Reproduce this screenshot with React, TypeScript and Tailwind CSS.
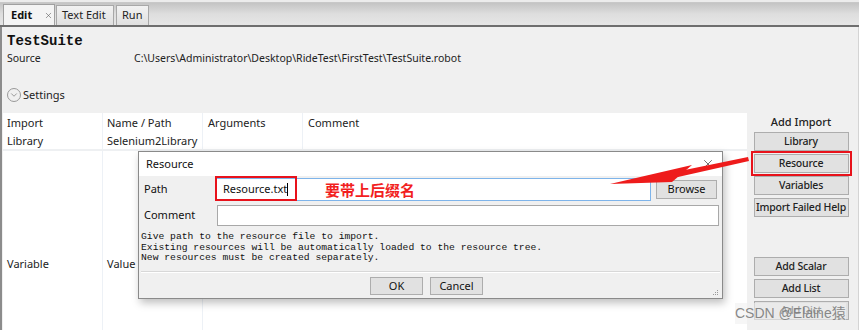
import { ChevronDown, X } from "lucide-react";

const ui = "font-['Noto_Sans','Noto_Sans_CJK_SC',sans-serif]";

const SideButton = ({ label }: { label: string }) => (
  <div className="w-[95px] h-[19px] bg-[#e1e1e1] border border-[#adadad] flex items-center justify-center whitespace-nowrap text-[10.5px] tracking-[-0.2px] font-medium text-[#222]">
    {label}
  </div>
);

const DialogButton = ({ label }: { label: string }) => (
  <div className="w-[53px] h-[18px] bg-[#e1e1e1] border border-[#adadad] flex items-center justify-center text-[11px] text-[#111]">
    {label}
  </div>
);

const ResourceDialog = () => (
  <div className="absolute left-[138px] top-[151px] w-[585px] h-[148px] border border-[#8a8a8a] bg-[#f0f0f0] shadow-[2px_4px_8px_rgba(0,0,0,0.25)] flex flex-col">
    <div className="h-[24px] bg-white flex items-center justify-between pl-[7px] pr-[7px] text-[11px] text-[#111]">
      <span>Resource</span>
      <X size={14} strokeWidth={1.2} className="text-[#333]" />
    </div>
    <div className="flex items-center h-[23px] mt-[2px] pl-[5px]">
      <span className="w-[72px] text-[11px] text-[#111]">Path</span>
      <div className="relative w-[435px] h-[23px] bg-white border border-[#7eb4ea] flex items-center pl-[6px] text-[11px] text-[#111]">
        Resource.txt
        <span className="w-px h-[13px] bg-black" />
        <div className="absolute left-[-2px] top-[-3px] w-[82px] h-[25px] border-2 border-[#e8121b]" />
        <span className="absolute left-[108px] top-[1px] text-[15px] font-bold text-[#f21f1f] font-['Noto_Sans_CJK_SC',sans-serif] leading-[20px]">
          要带上后缀名
        </span>
      </div>
      <div className="ml-[5px] w-[61px] h-[19px] bg-[#e1e1e1] border border-[#adadad] flex items-center justify-center text-[11px] text-[#111]">
        Browse
      </div>
    </div>
    <div className="flex items-center h-[21px] mt-[4px] pl-[5px]">
      <span className="w-[73px] text-[11px] text-[#111]">Comment</span>
      <div className="w-[502px] h-[21px] bg-white border border-[#a8a8a8]" />
    </div>
    <div className="mt-[6px] pl-[2px] font-['Liberation_Mono',monospace] text-[9.7px] leading-[10.6px] text-[#111] whitespace-pre">
      <div>Give path to the resource file to import.</div>
      <div>Existing resources will be automatically loaded to the resource tree.</div>
      <div>New resources must be created separately.</div>
    </div>
    <div className="mx-[2px] mt-[7px] h-[2px] bg-[#d8d8d8] border-b border-white" />
    <div className="flex justify-center gap-[7px] mt-[4px] pr-[8px]">
      <DialogButton label="OK" />
      <DialogButton label="Cancel" />
    </div>
    <svg className="absolute right-[3px] bottom-[2px]" width="7" height="7" viewBox="0 0 7 7">
      <rect x="5" y="1" width="1" height="1" fill="#999" />
      <rect x="3" y="3" width="1" height="1" fill="#999" />
      <rect x="5" y="3" width="1" height="1" fill="#999" />
      <rect x="1" y="5" width="1" height="1" fill="#999" />
      <rect x="3" y="5" width="1" height="1" fill="#999" />
      <rect x="5" y="5" width="1" height="1" fill="#999" />
    </svg>
  </div>
);

export default function App() {
  return (
    <div className={`relative w-[859px] h-[330px] overflow-hidden bg-[#f0f0f0] ${ui}`}>
      {/* tab bar */}
      <div className="h-[3px] bg-[#ececec] border-b border-[#c8c8c8]" />
      <div className="h-[24px] flex items-end px-[3px] bg-gradient-to-b from-[#c4c4c4] via-[#dedede] to-[#e6e6e6] border-b-2 border-[#6e6e6e]">
        <div className="h-[21px] w-[52px] bg-[#f4f4f4] border border-b-0 border-[#a0a0a0] flex items-center pl-[7px] gap-[12px] text-[11px] font-bold text-[#111]">
          Edit
          <X size={9} strokeWidth={1.5} className="text-[#555]" />
        </div>
        <div className="h-[20px] w-[58px] ml-px bg-gradient-to-b from-[#f2f2f2] to-[#e0e0e0] border border-b-0 border-[#a8a8a8] flex items-center pl-[5px] text-[11px] text-[#222]">
          Text Edit
        </div>
        <div className="h-[20px] w-[33px] ml-[2px] bg-gradient-to-b from-[#f2f2f2] to-[#e0e0e0] border border-b-0 border-[#a8a8a8] flex items-center pl-[5px] text-[11px] text-[#222]">
          Run
        </div>
      </div>

      {/* main */}
      <div className="h-[303px] border-l-2 border-[#8c8c8c] border-r border-r-[#d4d4d4] flex flex-col">
        <div className="pl-[5px] pt-[5px] h-[23px] font-['Liberation_Mono',monospace] font-bold text-[14px] text-[#111] flex items-center">
          TestSuite
        </div>
        <div className="pl-[5px] mt-[2px] h-[14px] flex items-center text-[10.5px] text-[#222]">
          <span className="w-[127px]">Source</span>
          <span>C:\Users\Administrator\Desktop\RideTest\FirstTest\TestSuite.robot</span>
        </div>
        <div className="pl-[5px] mt-[21px] h-[16px] flex items-center text-[11px] text-[#222]">
          <span className="w-[14px] h-[14px] rounded-full border border-[#999] flex items-center justify-center mr-[2px]">
            <ChevronDown size={10} strokeWidth={1.5} className="text-[#666]" />
          </span>
          Settings
        </div>

        <div className="mt-[10px] flex flex-1">
          <div className="w-[744px] ml-px bg-white flex flex-col text-[11px] text-[#222]">
            <div className="flex h-[20px] items-center">
              <div className="w-[100px] pl-[4px] border-r border-[#edf1f6] h-full flex items-center">Import</div>
              <div className="w-[100px] pl-[4px] border-r border-[#edf1f6] h-full flex items-center">Name / Path</div>
              <div className="w-[100px] pl-[5px] border-r border-[#edf1f6] h-full flex items-center">Arguments</div>
              <div className="flex-1 pl-[5px] h-full flex items-center">Comment</div>
            </div>
            <div className="flex h-[18px] items-center border-b-2 border-[#eef0f2]">
              <div className="w-[100px] pl-[4px] border-r border-[#edf1f6] h-full flex items-center">Library</div>
              <div className="w-[100px] pl-[4px] border-r border-[#edf1f6] h-full flex items-center">Selenium2Library</div>
              <div className="w-[100px] border-r border-[#edf1f6] h-full" />
              <div className="flex-1" />
            </div>
            <div className="flex flex-1">
              <div className="w-[100px] pl-[4px] border-r border-[#edf1f6] pt-[105px]">Variable</div>
              <div className="w-[100px] pl-[4px] border-r border-[#edf1f6] pt-[105px]">Value</div>
              <div className="flex-1" />
            </div>
          </div>

          <div className="flex-1 flex flex-col items-center pt-[1px] pr-[3px]">
            <div className="h-[17px] flex items-center text-[11px] font-medium text-[#222]">Add Import</div>
            <div className="mt-[1px]">
              <SideButton label="Library" />
            </div>
            <div className="mt-0 p-px border-2 border-[#e8121b]">
              <SideButton label="Resource" />
            </div>
            <div className="mt-0">
              <SideButton label="Variables" />
            </div>
            <div className="mt-[3px]">
              <SideButton label="Import Failed Help" />
            </div>
            <div className="mt-[40px]">
              <SideButton label="Add Scalar" />
            </div>
            <div className="mt-[3px]">
              <SideButton label="Add List" />
            </div>
            <div className="mt-[3px]">
              <SideButton label="Add Dict" />
            </div>
          </div>
        </div>
      </div>

      <ResourceDialog />

      {/* red arrow annotation */}
      <svg className="absolute left-0 top-0 pointer-events-none" width="859" height="330" viewBox="0 0 859 330">
        <polygon points="748,157 749,161 678,177 675,172" fill="#ee1b1b" />
        <polygon points="610,184 692,165 672,182" fill="#ee1b1b" />
      </svg>

      <div className="absolute left-[735px] top-[303px] text-[14px] text-[#7b7b7b]/90 font-['Liberation_Sans','Noto_Sans_CJK_SC',sans-serif] bg-[#f0f0f0]/60">
        CSDN @Elaine猿
      </div>
    </div>
  );
}
